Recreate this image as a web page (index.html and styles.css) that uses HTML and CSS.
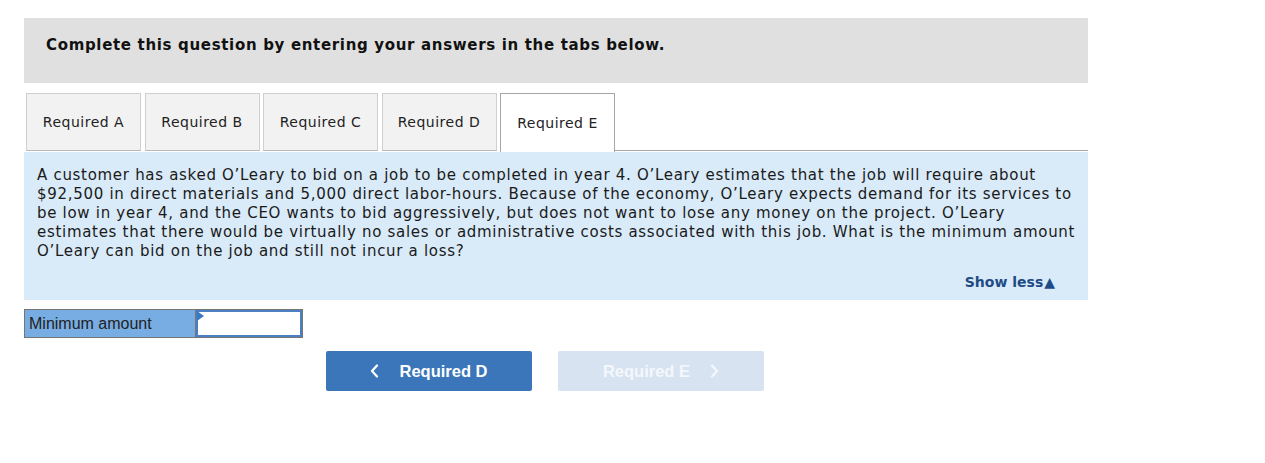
FILE: index.html
```html
<!DOCTYPE html>
<html>
<head>
<meta charset="utf-8">
<link rel="stylesheet" href="styles.css">
</head>
<body>
<div class="page">
  <div class="intro">Complete this question by entering your answers in the tabs below.</div>
  <div class="tabs">
    <div class="tab">Required A</div>
    <div class="tab">Required B</div>
    <div class="tab">Required C</div>
    <div class="tab">Required D</div>
    <div class="tab active">Required E</div>
    <div class="tab-fill"></div>
  </div>
  <div class="panel">
    <p class="question">A customer has asked O’Leary to bid on a job to be completed in year 4. O’Leary estimates that the job will require about $92,500 in direct materials and 5,000 direct labor-hours. Because of the economy, O’Leary expects demand for its services to be low in year 4, and the CEO wants to bid aggressively, but does not want to lose any money on the project. O’Leary estimates that there would be virtually no sales or administrative costs associated with this job. What is the minimum amount O’Leary can bid on the job and still not incur a loss?</p>
    <div class="show-row"><span class="show-less">Show less<span class="tri">▲</span></span></div>
  </div>
  <div class="answer">
    <div class="label">Minimum amount</div>
    <div class="input"><span class="flag"></span></div>
  </div>
  <div class="nav">
    <button class="btn prev"><svg class="chev" width="9" height="14" viewBox="0 0 9 14"><polyline points="7,1.5 2,7 7,12.5" fill="none" stroke="currentColor" stroke-width="2.2" stroke-linecap="round" stroke-linejoin="round"/></svg>Required D</button>
    <button class="btn next">Required E<svg class="chev" width="9" height="14" viewBox="0 0 9 14"><polyline points="2,1.5 7,7 2,12.5" fill="none" stroke="currentColor" stroke-width="2.2" stroke-linecap="round" stroke-linejoin="round"/></svg></button>
  </div>
</div>
</body>
</html>
```

FILE: styles.css
```css
html, body {
  margin: 0;
  padding: 0;
  background: #fff;
}
.page {
  padding: 18px 0 0 24px;
  width: 1064px;
  font-family: "DejaVu Sans", Verdana, sans-serif;
  color: #1a1a1a;
}
.intro {
  background: #e0e0e0;
  height: 65px;
  box-sizing: border-box;
  padding: 18px 0 0 22px;
  font-weight: bold;
  font-size: 15px;
  letter-spacing: 0.67px;
  color: #111;
}
.tabs {
  display: flex;
  margin-top: 10px;
  height: 59px;
  padding-left: 2px;
  gap: 3.5px;
}
.tab {
  width: 115px;
  box-sizing: border-box;
  height: 58px;
  border: 1px solid #cfcfcf;
  border-bottom: 1px solid #b8b8b8;
  background: #f2f2f2;
  font-size: 14px;
  letter-spacing: 0.5px;
  display: flex;
  align-items: center;
  justify-content: center;
  color: #222;
}
.tab.active {
  background: #fff;
  border: 1px solid #a6a6a6;
  border-bottom: none;
  height: 59px;
  padding-bottom: 1px;
}
.tab-fill {
  flex: 1;
  align-self: flex-end;
  margin-left: -3.5px;
  border-bottom: 1px solid #a6a6a6;
  height: 0;
  margin-bottom: 1px;
}
.panel {
  background: #d9eaf8;
  padding: 14px 12px 10px 13px;
}
.question {
  margin: 0;
  font-size: 15px;
  letter-spacing: 0.7px;
  line-height: 19px;
  color: #1a1a1a;
}
.show-row {
  display: flex;
  justify-content: flex-end;
  padding-right: 21px;
  margin-top: 13px;
}
.show-less {
  color: #1e4a86;
  font-weight: bold;
  font-size: 14px;
  display: flex;
  align-items: center;
}
.tri {
  font-size: 14px;
  margin-left: 1px;
}
.answer {
  display: flex;
  margin-top: 9px;
  width: 279px;
  height: 29px;
  box-sizing: border-box;
  border: 1px solid #757575;
}
.label {
  width: 171px;
  background: #78ade3;
  border-right: 1px solid #757575;
  font-family: "Liberation Sans", Arial, sans-serif;
  font-size: 16px;
  color: #222;
  padding-left: 4px;
  display: flex;
  align-items: center;
  box-sizing: border-box;
}
.input {
  flex: 1;
  background: #fff;
  border: 2px solid #4a7fc4;
  position: relative;
}
.flag {
  position: absolute;
  left: -1px;
  top: -1px;
  width: 0;
  height: 0;
  border-top: 5px solid transparent;
  border-bottom: 5px solid transparent;
  border-left: 7px solid #3b78c0;
}
.nav {
  display: flex;
  gap: 26px;
  margin-top: 13px;
  padding-left: 302px;
}
.btn {
  width: 206px;
  height: 40px;
  border: none;
  border-radius: 2px;
  font-family: "Liberation Sans", Arial, sans-serif;
  font-weight: bold;
  font-size: 16.5px;
  display: flex;
  align-items: center;
  justify-content: center;
  padding: 0;
}
.btn.prev {
  background: #3a76b9;
  color: #fff;
}
.btn.next {
  background: #d7e3f1;
  color: #f4f7fb;
}
.chev {
  display: block;
}
.prev .chev { margin-right: 20px; }
.next .chev { margin-left: 20px; }
```
